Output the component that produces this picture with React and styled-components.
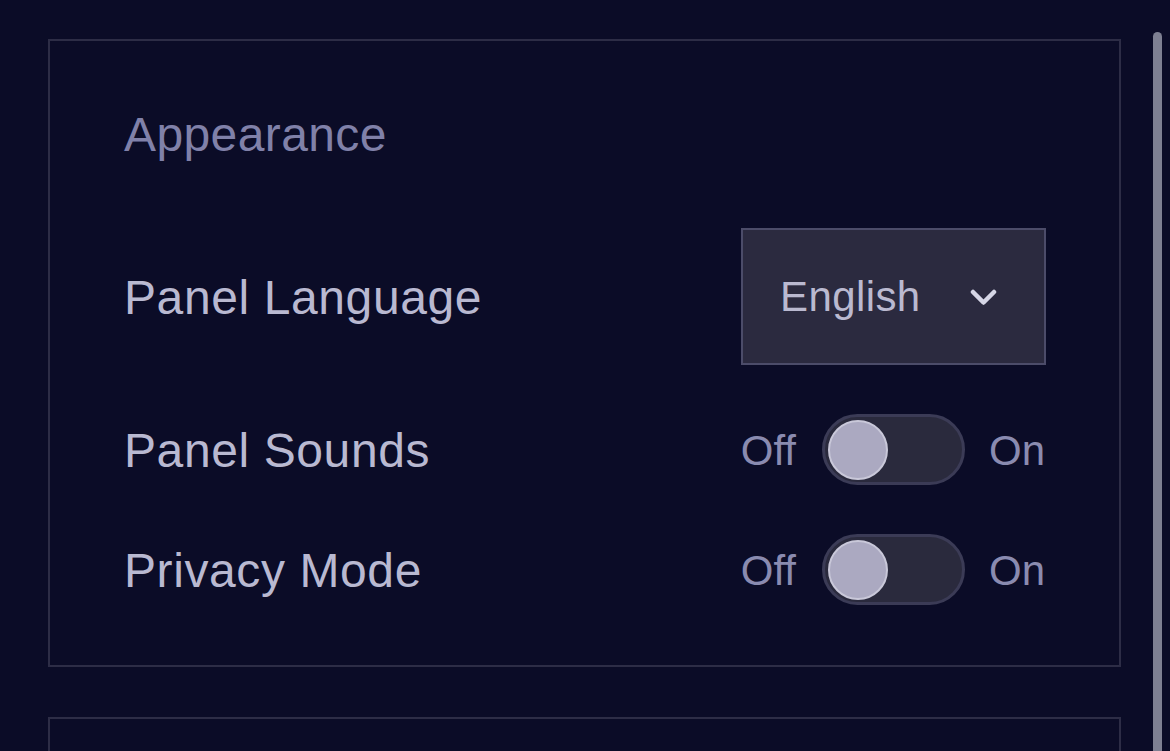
import React from 'react'
import styled, { createGlobalStyle } from 'styled-components'

const GlobalStyle = createGlobalStyle`
  html, body {
    margin: 0;
    padding: 0;
    background: #0b0c27;
    font-family: "Liberation Sans", Helvetica, Arial, sans-serif;
  }
`

const Page = styled.div`
  display: flex;
  flex-direction: row;
  align-items: flex-start;
  width: 1170px;
  height: 751px;
  overflow: hidden;
  background: #0b0c27;
`

const Content = styled.div`
  display: flex;
  flex-direction: column;
  gap: 50px;
  padding: 39px 0 0 48px;
`

const Card = styled.section`
  box-sizing: border-box;
  width: 1073px;
  height: ${(p) => p.height}px;
  border: 2px solid #2d2d46;
  padding: 66px 73px 0 74px;
  flex-shrink: 0;
`

const Title = styled.h2`
  margin: 0 0 65px 0;
  font-size: 48px;
  line-height: 56px;
  font-weight: 400;
  letter-spacing: 0.4px;
  color: #8081a9;
`

const Rows = styled.div`
  display: flex;
  flex-direction: column;
  gap: 49px;
`

const Row = styled.div`
  display: flex;
  flex-direction: row;
  justify-content: space-between;
  align-items: center;
`

const Label = styled.span`
  font-size: 48px;
  line-height: 56px;
  letter-spacing: 0.6px;
  margin-top: 3px;
  color: #b9b9d1;
`

const Select = styled.div`
  box-sizing: border-box;
  display: flex;
  flex-direction: row;
  align-items: center;
  justify-content: space-between;
  width: 305px;
  height: 137px;
  padding: 0 47px 0 37px;
  background: #2b2a3f;
  border: 2px solid #4c4c69;
  font-size: 42px;
  letter-spacing: 0.4px;
  color: #bab9d0;
`

const Chevron = styled.svg`
  display: block;
  width: 27px;
  height: 17px;
  margin-top: 2px;
`

const SwitchGroup = styled.div`
  display: flex;
  flex-direction: row;
  align-items: center;
`

const SwitchText = styled.span`
  font-size: 42px;
  line-height: 50px;
  color: #8a8bb0;
  margin: ${(p) => (p.side === 'left' ? '2px 26px 0 0' : '2px 1px 0 24px')};
`

const Track = styled.div`
  box-sizing: border-box;
  display: flex;
  align-items: center;
  width: 143px;
  height: 71px;
  padding: 0 3px;
  border: 3px solid #3b3b56;
  border-radius: 36px;
  background: #2a2a3d;
`

const Knob = styled.div`
  box-sizing: border-box;
  width: 60px;
  height: 60px;
  border-radius: 50%;
  background: #aba9c1;
  border: 2px solid #c9c8d9;
`

const Scrollbar = styled.div`
  width: 9px;
  height: 760px;
  margin: 32px 0 0 32px;
  background: #7e8092;
  border-radius: 5px 5px 0 0;
  flex-shrink: 0;
`

function Toggle() {
  return (
    <SwitchGroup>
      <SwitchText side="left">Off</SwitchText>
      <Track>
        <Knob />
      </Track>
      <SwitchText side="right">On</SwitchText>
    </SwitchGroup>
  )
}

export default function App() {
  return (
    <Page>
      <GlobalStyle />
      <Content>
        <Card height={628}>
          <Title>Appearance</Title>
          <Rows>
            <Row>
              <Label>Panel Language</Label>
              <Select>
                <span>English</span>
                <Chevron viewBox="0 0 27 17">
                  <polyline
                    points="3,3 13.5,13.5 24,3"
                    fill="none"
                    stroke="#d6d6e6"
                    strokeWidth="4.5"
                    strokeLinecap="round"
                    strokeLinejoin="round"
                  />
                </Chevron>
              </Select>
            </Row>
            <Row>
              <Label>Panel Sounds</Label>
              <Toggle />
            </Row>
            <Row>
              <Label>Privacy Mode</Label>
              <Toggle />
            </Row>
          </Rows>
        </Card>
        <Card height={300} />
      </Content>
      <Scrollbar />
    </Page>
  )
}
